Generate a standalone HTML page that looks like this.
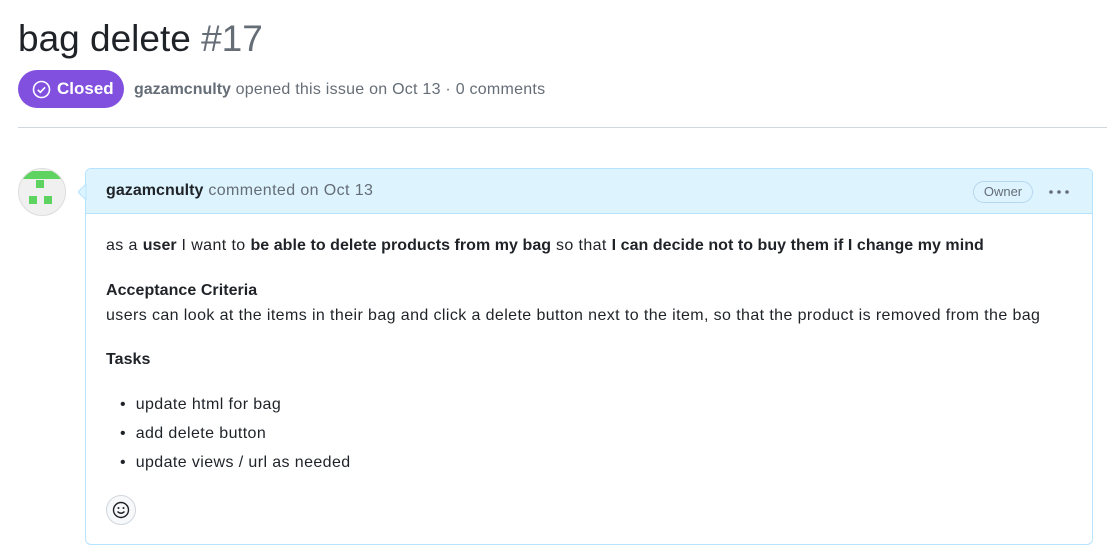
<!DOCTYPE html>
<html><head><style>
*{box-sizing:border-box;margin:0;padding:0}
body{width:1107px;height:546px;overflow:hidden;background:#fff;font-family:"Liberation Sans",sans-serif;color:#1f2328;position:relative}
.abs{position:absolute;white-space:nowrap}
b{font-weight:bold}
.t{letter-spacing:0.4px}
.t b{letter-spacing:0.05px}
</style></head><body>
<div class="abs" style="left:18px;top:16px;font-size:37px;line-height:46px;color:#1f2328">bag delete <span style="color:#656d76">#17</span></div>
<div class="abs" style="left:18px;top:70px;width:106px;height:38px;border-radius:19px;background:#8250df;color:#fff;font-size:17px;font-weight:bold;line-height:38px;padding-left:39px">Closed
<svg style="position:absolute;left:14px;top:10px" width="19" height="19" viewBox="0 0 19 19"><circle cx="9.5" cy="9.5" r="8" fill="none" stroke="#fff" stroke-width="1.6"/><path d="M5.8 9.8l2.5 2.5 4.8-5" fill="none" stroke="#fff" stroke-width="1.6"/></svg></div>
<div class="abs" style="left:134px;top:80px;font-size:16px;line-height:20px;color:#656d76;letter-spacing:0.25px"><b style="color:#656d76;letter-spacing:0">gazamcnulty</b> opened this issue on Oct 13 · 0 comments</div>
<div class="abs" style="left:18px;top:127px;width:1089px;height:1px;background:#d0d7de"></div>
<div class="abs" style="left:18px;top:168px;width:48px;height:48px;border-radius:50%;background:#f0f0f0;border:1px solid #ddd;overflow:hidden">
<div style="position:absolute;left:0;top:2px;width:48px;height:8px;background:#5fd35f"></div>
<div style="position:absolute;left:17px;top:11px;width:8px;height:8px;background:#5fd35f"></div>
<div style="position:absolute;left:10px;top:27px;width:8px;height:8px;background:#5fd35f"></div>
<div style="position:absolute;left:25px;top:27px;width:8px;height:8px;background:#5fd35f"></div>
</div>
<div class="abs" style="left:85px;top:168px;width:1008px;height:377px;border:1px solid #b6e3ff;border-radius:6px;overflow:hidden">
<div style="height:45px;background:#ddf4ff;border-bottom:1px solid #b6e3ff;position:relative">
<div class="abs t" style="left:20px;top:13px;font-size:16px;color:#656d76"><b style="color:#1f2328">gazamcnulty</b> commented on Oct 13</div>
<div class="abs" style="left:887px;top:12px;height:22px;width:60px;border:1px solid #b6d6ee;border-radius:11px;font-size:13px;line-height:20px;text-align:center;color:#656d76">Owner</div>
<svg class="abs" style="left:962px;top:20px" width="22" height="6" viewBox="0 0 22 6"><circle cx="3" cy="3" r="1.8" fill="#656d76"/><circle cx="11" cy="3" r="1.8" fill="#656d76"/><circle cx="19" cy="3" r="1.8" fill="#656d76"/></svg>
</div>
<div class="t" style="position:relative;font-size:16px;line-height:20px">
<div class="abs" style="left:20px;top:22px">as a <b>user</b> I want to <b>be able to delete products from my bag</b> so that <b>I can decide not to buy them if I change my mind</b></div>
<div class="abs" style="left:20px;top:67px"><b>Acceptance Criteria</b></div>
<div class="abs" style="left:20px;top:92px">users can look at the items in their bag and click a delete button next to the item, so that the product is removed from the bag</div>
<div class="abs" style="left:20px;top:136px"><b>Tasks</b></div>
<div class="abs" style="left:34px;top:181px">•&nbsp;&nbsp;update html for bag</div>
<div class="abs" style="left:34px;top:210px">•&nbsp;&nbsp;add delete button</div>
<div class="abs" style="left:34px;top:239px">•&nbsp;&nbsp;update views / url as needed</div>
<div class="abs" style="left:20px;top:281px;width:30px;height:30px;border-radius:50%;border:1px solid #d0d7de;background:#f6f8fa">
<svg style="position:absolute;left:5px;top:5px" width="18" height="18" viewBox="0 0 18 18"><circle cx="9" cy="9" r="7.5" fill="none" stroke="#1f2328" stroke-width="1.4"/><circle cx="6.5" cy="7" r="1" fill="#1f2328"/><circle cx="11.5" cy="7" r="1" fill="#1f2328"/><path d="M5.5 10.5q3.5 3.5 7 0" fill="none" stroke="#1f2328" stroke-width="1.4"/></svg></div>
</div></div>
<svg class="abs" style="left:78px;top:184px" width="9" height="16" viewBox="0 0 9 16"><path d="M8 0L0 8l8 8z" fill="#ddf4ff" stroke="#b6e3ff"/></svg>
</body></html>
